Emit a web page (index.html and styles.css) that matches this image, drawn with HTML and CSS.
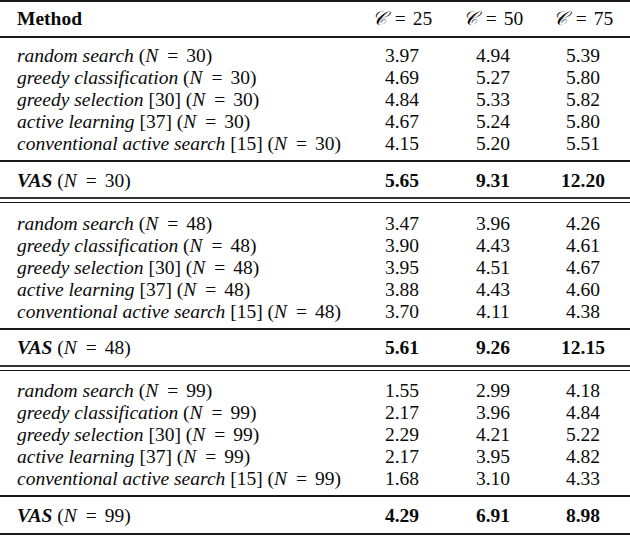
FILE: index.html
```html
<!DOCTYPE html>
<html>
<head>
<meta charset="utf-8">
<link rel="stylesheet" href="styles.css">
</head>
<body>
<div class="table">
  <div class="rule thick"></div>
  <div class="row head">
    <div class="method"><b>Method</b></div>
    <div class="num"><span class="cal">𝒞</span><span class="eq">=</span>25</div>
    <div class="num"><span class="cal">𝒞</span><span class="eq">=</span>50</div>
    <div class="num"><span class="cal">𝒞</span><span class="eq">=</span>75</div>
  </div>
  <div class="rule"></div>

  <div class="section s1">
    <div class="row"><div class="method"><i>random search</i> (<i class="m">N</i><span class="eq">=</span>30)</div><div class="num">3.97</div><div class="num">4.94</div><div class="num">5.39</div></div>
    <div class="row"><div class="method"><i>greedy classification</i> (<i class="m">N</i><span class="eq">=</span>30)</div><div class="num">4.69</div><div class="num">5.27</div><div class="num">5.80</div></div>
    <div class="row"><div class="method"><i>greedy selection</i> [30] (<i class="m">N</i><span class="eq">=</span>30)</div><div class="num">4.84</div><div class="num">5.33</div><div class="num">5.82</div></div>
    <div class="row"><div class="method"><i>active learning</i> [37] (<i class="m">N</i><span class="eq">=</span>30)</div><div class="num">4.67</div><div class="num">5.24</div><div class="num">5.80</div></div>
    <div class="row"><div class="method"><i>conventional active search</i> [15] (<i class="m">N</i><span class="eq">=</span>30)</div><div class="num">4.15</div><div class="num">5.20</div><div class="num">5.51</div></div>
  </div>
  <div class="rule"></div>
  <div class="row vas v1"><div class="method"><b><i>VAS</i></b> (<i class="m">N</i><span class="eq">=</span>30)</div><div class="num"><b>5.65</b></div><div class="num"><b>9.31</b></div><div class="num"><b>12.20</b></div></div>
  <div class="double"></div>

  <div class="section s2">
    <div class="row"><div class="method"><i>random search</i> (<i class="m">N</i><span class="eq">=</span>48)</div><div class="num">3.47</div><div class="num">3.96</div><div class="num">4.26</div></div>
    <div class="row"><div class="method"><i>greedy classification</i> (<i class="m">N</i><span class="eq">=</span>48)</div><div class="num">3.90</div><div class="num">4.43</div><div class="num">4.61</div></div>
    <div class="row"><div class="method"><i>greedy selection</i> [30] (<i class="m">N</i><span class="eq">=</span>48)</div><div class="num">3.95</div><div class="num">4.51</div><div class="num">4.67</div></div>
    <div class="row"><div class="method"><i>active learning</i> [37] (<i class="m">N</i><span class="eq">=</span>48)</div><div class="num">3.88</div><div class="num">4.43</div><div class="num">4.60</div></div>
    <div class="row"><div class="method"><i>conventional active search</i> [15] (<i class="m">N</i><span class="eq">=</span>48)</div><div class="num">3.70</div><div class="num">4.11</div><div class="num">4.38</div></div>
  </div>
  <div class="rule"></div>
  <div class="row vas v2"><div class="method"><b><i>VAS</i></b> (<i class="m">N</i><span class="eq">=</span>48)</div><div class="num"><b>5.61</b></div><div class="num"><b>9.26</b></div><div class="num"><b>12.15</b></div></div>
  <div class="double"></div>

  <div class="section s3">
    <div class="row"><div class="method"><i>random search</i> (<i class="m">N</i><span class="eq">=</span>99)</div><div class="num">1.55</div><div class="num">2.99</div><div class="num">4.18</div></div>
    <div class="row"><div class="method"><i>greedy classification</i> (<i class="m">N</i><span class="eq">=</span>99)</div><div class="num">2.17</div><div class="num">3.96</div><div class="num">4.84</div></div>
    <div class="row"><div class="method"><i>greedy selection</i> [30] (<i class="m">N</i><span class="eq">=</span>99)</div><div class="num">2.29</div><div class="num">4.21</div><div class="num">5.22</div></div>
    <div class="row"><div class="method"><i>active learning</i> [37] (<i class="m">N</i><span class="eq">=</span>99)</div><div class="num">2.17</div><div class="num">3.95</div><div class="num">4.82</div></div>
    <div class="row"><div class="method"><i>conventional active search</i> [15] (<i class="m">N</i><span class="eq">=</span>99)</div><div class="num">1.68</div><div class="num">3.10</div><div class="num">4.33</div></div>
  </div>
  <div class="rule"></div>
  <div class="row vas v3"><div class="method"><b><i>VAS</i></b> (<i class="m">N</i><span class="eq">=</span>99)</div><div class="num"><b>4.29</b></div><div class="num"><b>6.91</b></div><div class="num"><b>8.98</b></div></div>
  <div class="rule thick"></div>
</div>
</body>
</html>
```

FILE: styles.css
```css
html, body {
  margin: 0;
  padding: 0;
  background: #fff;
}
.table {
  width: 630px;
  font-family: "Liberation Serif", "Times New Roman", serif;
  font-size: 19.5px;
  color: #0a0a0a;
}
.row {
  display: grid;
  grid-template-columns: 1fr 96px 86px 94px;
  height: 22px;
  line-height: 22px;
  white-space: nowrap;
}
.row.head {
  height: 34px;
  line-height: 34px;
}
.row.vas {
  height: 22px;
  padding: 8px 0 5px;
}
.row.v2 {
  padding: 7px 0 6px;
}
.row.v3 {
  padding: 8px 0 6px;
}
.method {
  padding-left: 17px;
}
.num {
  text-align: center;
}
.section {
  padding: 9px 0 5px;
}
.section.s1 {
  padding-top: 7px;
}
.section.s2 {
  padding-top: 10px;
}
.rule {
  height: 2px;
  background: #1a1a1a;
}
.double {
  height: 3px;
  border-top: 2px solid #333;
  border-bottom: 1px solid #111;
}
.m {
  padding-right: 1px;
}
.eq {
  margin: 0 8px;
}
.head .eq {
  margin: 0 7px 0 9px;
}
.cal {
  font-style: italic;
}
```
